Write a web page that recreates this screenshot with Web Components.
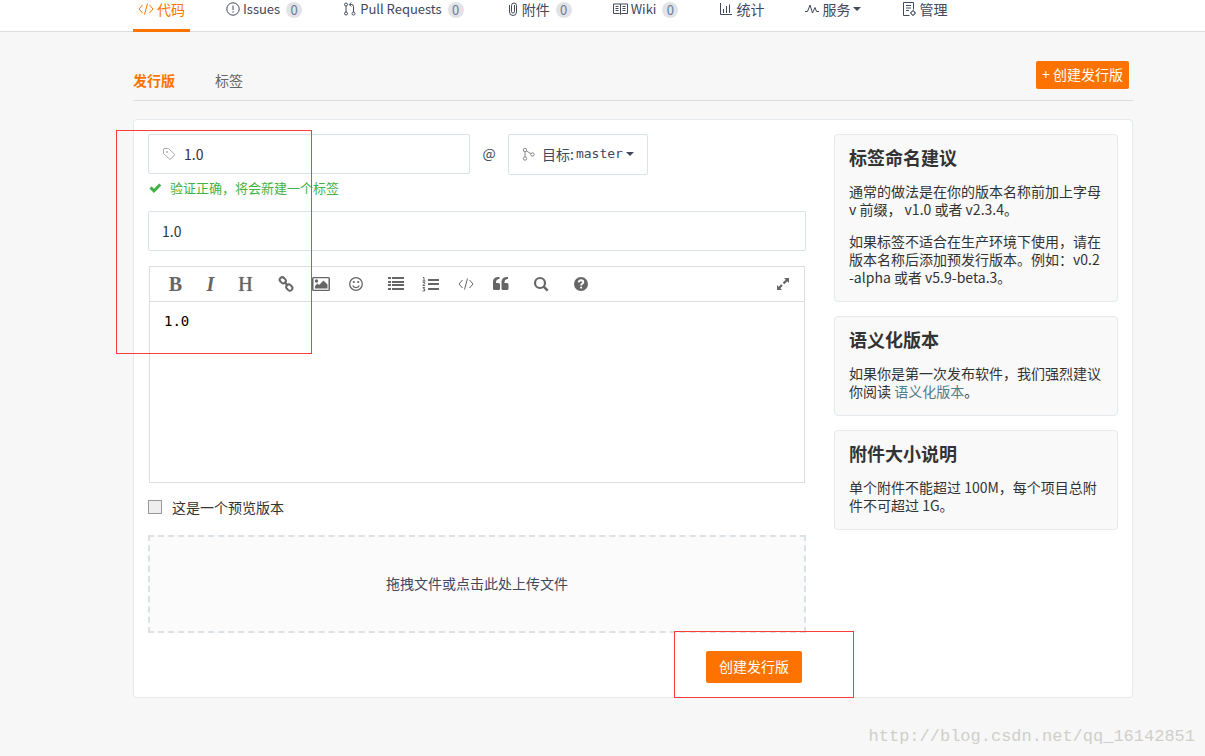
<!DOCTYPE html>
<html lang="zh-CN">
<head>
<meta charset="utf-8">
<title>创建发行版</title>
<style>
  html, body { margin: 0; }
  body {
    min-height: 100vh;
    background: #f7f7f7;
    color: #333;
    font: 14px/20px "Noto Sans CJK SC", "Liberation Sans", sans-serif;
  }
</style>
</head>
<body>
<release-page></release-page>

<script>
const define = (name, html, setup) => {
  const template = document.createElement('template');
  template.innerHTML = html;
  customElements.define(name, class extends HTMLElement {
    connectedCallback() {
      if (this.shadowRoot) return;
      const root = this.attachShadow({ mode: 'open' });
      root.append(template.content.cloneNode(true));
      if (setup) setup(this, root);
    }
  });
};

const line = (body, w = 16) => `<svg viewBox="0 0 ${w} 16" width="${w}" height="16" fill="none" stroke="currentColor">${body}</svg>`;
const solid = (body, w = 16) => `<svg viewBox="0 0 ${w} 16" width="${w}" height="16" fill="currentColor">${body}</svg>`;
const icons = {
  code: line('<path d="M4.5 4 1 8l3.500 4M11.500 4 15 8l-3.500 4M9.500 2.500l-3 11"/>'),
  issue: line('<circle cx="7" cy="8" r="6.200"/><path d="M7 4.500v4.500M7 10.200v1.500"/>', 14),
  pull: line('<circle cx="3" cy="3.500" r="1.500"/><circle cx="3" cy="12.500" r="1.500"/><circle cx="10.500" cy="12.500" r="1.500"/><path d="M3 5v6M10.500 11V5.500q0-2-2-2H6.500M8.300 1.500l-2 2 2 2"/>', 14),
  clip: line('<path d="M9.500 4v6.500a1.500 1.500 0 0 1-3 0V4.500a2.500 2.500 0 0 1 5 0V11a3.500 3.500 0 0 1-7 0V4"/>', 14),
  book: line('<path d="M.500 3h14v9.500H8.500l-1 .800-1-.800h-6zM7.500 3v10M2.500 5.500h3M2.500 7.500h3M2.500 9.500h3M9.500 5.500h3M9.500 7.500h3M9.500 9.500h3"/>', 15),
  chart: line('<path d="M1.500 2v11.500H13M4.500 12V8M7.500 12V5M10.500 12V3.500"/>', 14),
  pulse: line('<path d="M0 10.500h2.500l2.500-6.500 2.500 8 2.500-5.500 1.500 4h2.500"/>', 14),
  manage: line('<path d="M7.500 14.500h-6v-13h10v7M4 4.500h5M4 7h5M4 9.500h3"/><circle cx="11" cy="12" r="2"/><path d="M11 9v1M11 14v1M8 12h1M13 12h1"/>', 14),
  caret: solid('<path d="M0 6h8L4 10z"/>', 8),
  tag: line('<path d="M1.500 3v4.500L8 13.500 13 8.700 6.500 2.500H2z"/><circle cx="5" cy="6" r=".600"/>', 14),
  branch: line('<circle cx="3" cy="4" r="1.700"/><circle cx="3" cy="12.500" r="1.700"/><circle cx="10.500" cy="8.500" r="1.700"/><path d="M3 5.700v5.100M4.500 5l4.500 2.700"/>', 13),
  check: solid('<path d="M1.500 8.500 3.700 6.300 6 8.700 11.200 3.500 13.300 5.600 6 12.900z"/>', 14),
  link: line('<g stroke-width="2"><rect x="1.500" y="1.800" width="6.600" height="5" rx="2.500" transform="rotate(45 4.800 4.300)"/><rect x="8" y="9" width="6.600" height="5" rx="2.500" transform="rotate(45 11.300 11.500)"/><path d="m6.300 6 3.700 3.800"/></g>'),
  image: `<svg viewBox="0 0 18 16" width="18" height="16" fill="currentColor"><path fill-rule="evenodd" d="M1.500 1h15q1.500 0 1.500 1.500v11q0 1.500-1.500 1.500h-15Q0 15 0 13.500v-11Q0 1 1.500 1zm0 1.200v11.600h15V2.200z"/><circle cx="4.500" cy="5" r="1.700"/><path d="M3 12.500V10l2.500-2.500L7 9l4.500-4.500L15.500 8.500v4z"/></svg>`,
  smile: line('<circle cx="8" cy="8" r="6.300" stroke-width="1.300"/><path d="M4.700 9.500c1 2.700 5.600 2.700 6.600 0" stroke-width="1.200"/><g fill="currentColor" stroke="none"><circle cx="5.800" cy="6" r="1.100"/><circle cx="10.200" cy="6" r="1.100"/></g>'),
  ul: solid('<path d="M0 1h3v2H0zM4 1h12v2H4zM0 5h3v2H0zM4 5h12v2H4zM0 8h3v2H0zM4 8h12v2H4zM0 12h3v2H0zM4 12h12v2H4z"/>'),
  ol: `<svg viewBox="0 0 17 16" width="17" height="16" fill="none" stroke="currentColor"><path stroke-width="2" d="M6 4H17M6 8H17M6 13H17"/><path d="M1 1.500h1v3.500M.500 5h3M.700 6.500h2v1.300l-2 1.700h2.500M.700 11.500h2l-1.200 1.500h1.200v2H.500"/></svg>`,
  quote: solid('<path d="M7 8.500v4q0 1.500-1.500 1.500h-4Q0 14 0 12.500V6q0-4.500 4.800-5H6.500v2H5.500Q3 3.500 3 6v1h2.500Q7 7 7 8.500zM15.500 8.500v4q0 1.500-1.500 1.500h-4q-1.500 0-1.500-1.500V6q0-4.500 4.800-5H15v2h-1q-2.500.500-2.500 3v1H14q1.500 0 1.500 1.500z"/>'),
  search: line('<circle cx="7" cy="7" r="5" stroke-width="2.200"/><path d="m10.700 10.700 4 4" stroke-width="2.500"/>'),
  help: `<svg viewBox="0 0 16 16" width="16" height="16"><circle cx="8" cy="8" r="7" fill="currentColor"/><path d="M5.700 6.300Q6 4.200 8.100 4.200q2.200.100 2.200 1.900 0 1-1.200 1.700-1 .600-1 1.700M8.100 10.700v1.800" fill="none" stroke="#fff" stroke-width="1.900"/></svg>`,
  expand: solid('<path d="M9 2h5v5l-1.700-1.700-3 3-1.600-1.600 3-3zM7 14H2V9l1.700 1.700 2.500-2.500 1.600 1.600-2.500 2.500z"/>')
};

define('ui-icon', `<style>
  :host { display: inline-flex; flex: none; }
  svg { display: block; }
</style>`, (host, root) => {
  root.append(document.createRange().createContextualFragment(icons[host.getAttribute('name')]));
});

define('nav-tab', `<style>
  :host { display: block; }
  a {
    display: flex; align-items: center; gap: 3px; height: 18px; line-height: 18px;
    padding: 0 5px 11px; border-bottom: 3px solid transparent;
    color: #40485b; text-decoration: none; white-space: nowrap;
  }
  :host([active]) a { color: #fe7300; border-color: #fe7300; }
  :host([latin]) { font-size: 13px; }
  .count {
    width: 16px; height: 16px; border-radius: 8px;
    margin: 2px 0 0 3px; background: #e1e3e6; color: #6b7a99;
    font-size: 13px; line-height: 16px; text-align: center;
  }
  [hidden] { display: none; }
</style>
<a href="#"><slot></slot><span class="count" hidden></span></a>`, (host, root) => {
  const link = root.querySelector('a');
  const makeIcon = name => {
    const icon = document.createElement('ui-icon');
    icon.setAttribute('name', name);
    return icon;
  };
  link.prepend(makeIcon(host.getAttribute('icon')));
  if (host.hasAttribute('active')) link.setAttribute('aria-current', 'page');
  if (host.hasAttribute('count')) {
    const badge = root.querySelector('.count');
    badge.textContent = host.getAttribute('count');
    badge.hidden = false;
  }
  if (host.hasAttribute('menu')) link.append(makeIcon('caret'));
});

define('repo-nav', `<style>
  :host { display: block; height: 31px; background: #fff; border-bottom: 1px solid #dcddde; }
  nav { display: flex; gap: 31px; padding: 0 72px 0 133px; }
</style>
<nav>
  <nav-tab icon="code" active>代码</nav-tab>
  <nav-tab icon="issue" count="0" latin>Issues</nav-tab>
  <nav-tab icon="pull" count="0" latin>Pull Requests</nav-tab>
  <nav-tab icon="clip" count="0">附件</nav-tab>
  <nav-tab icon="book" count="0" latin>Wiki</nav-tab>
  <nav-tab icon="chart">统计</nav-tab>
  <nav-tab icon="pulse" menu>服务</nav-tab>
  <nav-tab icon="manage">管理</nav-tab>
</nav>`);

define('orange-button', `<style>
  :host { display: inline-block; }
  button {
    display: block; height: 32px; padding: 0 13px 2px; border: 0; border-radius: 2px;
    background: #fe7300; color: #fff; font: inherit; white-space: nowrap; cursor: pointer;
  }
  :host([compact]) button { height: 28px; padding: 0 6px 2px; }
</style>
<button type="button"><slot></slot></button>`);

define('release-tabs', `<style>
  :host {
    display: flex; justify-content: space-between; align-items: flex-start;
    height: 39px; padding: 29px 4px 0 0; border-bottom: 1px solid #dcddde;
  }
  nav { display: flex; gap: 40px; padding-top: 9px; }
  a { color: #666; text-decoration: none; }
  a[aria-current] { color: #fe7300; font-weight: bold; }
</style>
<nav><a href="#" aria-current="page">发行版</a><a href="#">标签</a></nav>
<orange-button compact>+ 创建发行版</orange-button>`);

define('help-card', `<style>
  :host {
    display: block; padding: 14px 14px 15px; border: 1px solid #e3e9ed; border-radius: 4px;
    background: #f9f9f9; line-height: 18px;
  }
  h2 { margin: 0 0 3px; font-size: 18px; line-height: 16px; }
  ::slotted(p) { margin: 0; padding-bottom: 14px; }
  .body { display: block; padding-top: 14px; margin-bottom: -14px; }
</style>
<h2><slot name="title"></slot></h2><div class="body"><slot></slot></div>`);

define('markdown-editor', `<style>
  :host { display: block; margin: 0 1px; border: 1px solid #ddd; background: #fff; }
  .bar { display: flex; gap: 5px; height: 34px; padding: 0 4px 0 8px; border-bottom: 1px solid #ddd; }
  .group { display: flex; }
  .group:last-child { margin-left: auto; }
  button {
    display: flex; align-items: center; justify-content: center; width: 35px; padding: 0;
    border: 0; background: none; color: #666; cursor: pointer;
    font: bold 20px/34px "Liberation Serif", serif;
  }
  .italic { font-style: italic; }
  .heading { font-weight: normal; text-shadow: 0 0 1px #666; }
  textarea {
    display: block; box-sizing: border-box; width: 100%; height: 180px;
    padding: 8px 14px; border: 0; outline: 0; resize: none; background: none;
    color: #000; font: 14px/22px "DejaVu Sans Mono", monospace;
  }
</style>
<div class="bar" role="toolbar" aria-label="编辑工具">
  <div class="group">
    <button type="button">B</button>
    <button type="button" class="italic">I</button>
    <button type="button" class="heading">H</button>
  </div>
  <div class="group">
    <button type="button" aria-label="链接"><ui-icon name="link"></ui-icon></button>
    <button type="button" aria-label="图片"><ui-icon name="image"></ui-icon></button>
    <button type="button" aria-label="表情"><ui-icon name="smile"></ui-icon></button>
  </div>
  <div class="group">
    <button type="button" aria-label="无序列表"><ui-icon name="ul"></ui-icon></button>
    <button type="button" aria-label="有序列表"><ui-icon name="ol"></ui-icon></button>
    <button type="button" aria-label="代码"><ui-icon name="code"></ui-icon></button>
    <button type="button" aria-label="引用"><ui-icon name="quote"></ui-icon></button>
  </div>
  <div class="group"><button type="button" aria-label="搜索"><ui-icon name="search"></ui-icon></button></div>
  <div class="group"><button type="button" aria-label="帮助"><ui-icon name="help"></ui-icon></button></div>
  <div class="group"><button type="button" aria-label="全屏"><ui-icon name="expand"></ui-icon></button></div>
</div>
<textarea aria-label="发行版描述">1.0</textarea>`);

define('release-form', `<style>
  :host { display: block; }
  .target-row { display: flex; align-items: flex-start; height: 41px; }
  .field {
    display: flex; align-items: center; box-sizing: border-box; height: 40px; padding: 0 13px;
    border: 1px solid #dae2e8; border-radius: 2px; background: #fff;
  }
  .field input {
    flex: 1; min-width: 0; padding: 0; border: 0; outline: 0; background: none;
    color: #333; font: inherit;
  }
  .tag { flex: 0 1 322px; gap: 8px; }
  .tag ui-icon { color: #aaa; }
  .at { width: 38px; line-height: 38px; text-align: center; color: #40485b; }
  .branch { height: 41px; padding-bottom: 2px; color: #40485b; }
  .branch ui-icon:first-child { color: #888; margin-right: 7px; }
  select {
    appearance: none; padding: 0 3px 0 2px; border: 0; outline: 0; background: none;
    color: inherit; font: 13px/20px "DejaVu Sans Mono", monospace;
  }
  .valid {
    display: flex; align-items: center; gap: 8px; margin: 3px 0 13px; height: 20px;
    color: #43b244; font-size: 13px;
  }
  markdown-editor { margin-top: 15px; }
  .preview { display: flex; align-items: center; gap: 10px; margin: 14px 0 18px; height: 20px; }
  .preview input {
    appearance: none; box-sizing: border-box; width: 14px; height: 14px; margin: 0;
    border: 1px solid #999; background: #eee;
  }
  .preview input:checked { background: #fe7300; }
  .drop {
    display: block; width: 100%; height: 98px; padding: 0 0 2px; border: 2px dashed #dae2e8;
    background: #fbfbfb; color: #40485b; font: inherit; cursor: pointer;
  }
  .actions { display: flex; justify-content: flex-end; padding: 18px 4px 0 0; }
</style>
<div class="target-row">
  <div class="field tag"><ui-icon name="tag"></ui-icon><input type="text" value="1.0" aria-label="标签名称"></div>
  <span class="at">@</span>
  <div class="field branch">
    <ui-icon name="branch"></ui-icon><label for="branch">目标:</label>
    <select id="branch"><option>master</option></select><ui-icon name="caret"></ui-icon>
  </div>
</div>
<div class="valid"><ui-icon name="check"></ui-icon><span>验证正确，将会新建一个标签</span></div>
<div class="field"><input type="text" value="1.0" aria-label="发行版标题"></div>
<markdown-editor></markdown-editor>
<div class="preview"><input type="checkbox" id="preview"><label for="preview">这是一个预览版本</label></div>
<button type="button" class="drop">拖拽文件或点击此处上传文件</button>
<div class="actions"><orange-button>创建发行版</orange-button></div>`);

define('release-page', `<style>
  :host { display: block; position: relative; min-height: 100vh; }
  main { padding: 0 72px 0 133px; }
  .panel {
    display: grid; grid-template-columns: minmax(0, 1fr) 284px; gap: 28px; align-items: start;
    margin-top: 18px; padding: 14px; border: 1px solid #e3e9ed; border-radius: 4px; background: #fff;
  }
  aside { display: grid; gap: 14px; }
  .docs { color: #4e7d8c; text-decoration: none; }
  .mark { position: absolute; box-sizing: border-box; border: 1px solid #f93c3c; pointer-events: none; }
  .mark.fields { left: 116px; top: 130px; width: 196px; height: 224px; }
  .mark.submit { right: 351px; top: 631px; width: 180px; height: 67px; }
  .watermark {
    position: absolute; right: 10px; bottom: 8px; color: #cfcfca;
    font: 17px/22px "Liberation Mono", monospace; pointer-events: none;
  }
</style>
<repo-nav></repo-nav>
<main>
  <release-tabs></release-tabs>
  <div class="panel">
    <release-form></release-form>
    <aside>
      <help-card><span slot="title">标签命名建议</span>
        <p>通常的做法是在你的版本名称前加上字母 v 前缀， v1.0 或者 v2.3.4。</p>
        <p>如果标签不适合在生产环境下使用，请在版本名称后添加预发行版本。例如：v0.2<wbr>-alpha 或者 v5.9-beta.3。</p>
      </help-card>
      <help-card><span slot="title">语义化版本</span>
        <p>如果你是第一次发布软件，我们强烈建议你阅读 <a class="docs" href="#">语义化版本</a>。</p>
      </help-card>
      <help-card><span slot="title">附件大小说明</span>
        <p>单个附件不能超过 100M，每个项目总附件不可超过 1G。</p>
      </help-card>
    </aside>
  </div>
</main>
<div class="mark fields"></div>
<div class="mark submit"></div>
<div class="watermark">http://blog.csdn.net/qq_16142851</div>`);
</script>
</body>
</html>
